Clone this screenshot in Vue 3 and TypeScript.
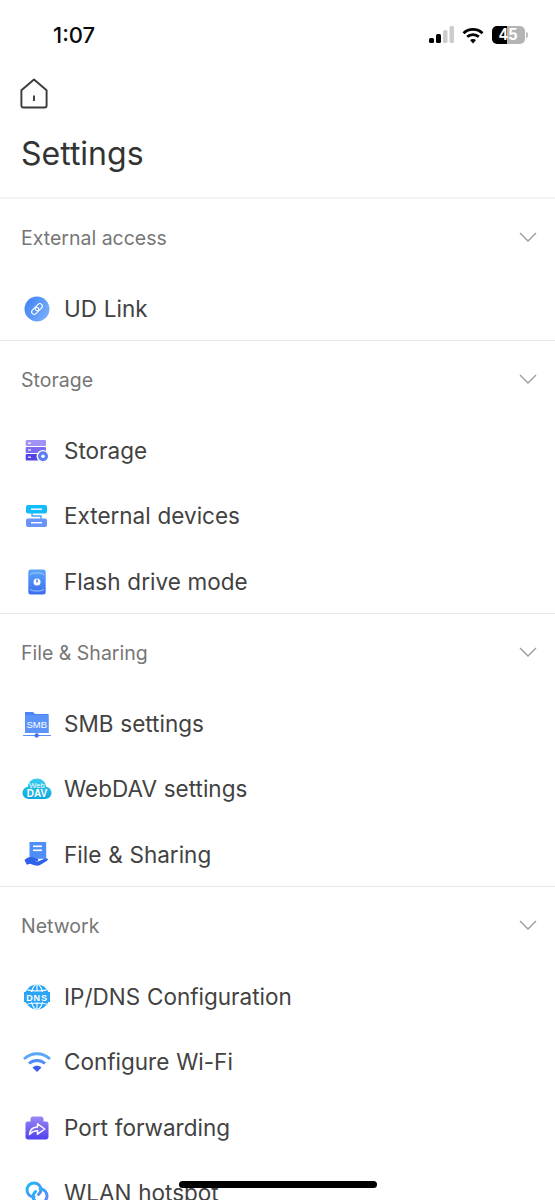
<script setup lang="ts">
interface Row { label: string; icon: string }
interface Section { title: string; rows: Row[] }
const sections: Section[] = [
  { title: 'External access', rows: [{ label: 'UD Link', icon: 'link' }] },
  { title: 'Storage', rows: [
    { label: 'Storage', icon: 'storage' },
    { label: 'External devices', icon: 'devices' },
    { label: 'Flash drive mode', icon: 'flash' },
  ] },
  { title: 'File & Sharing', rows: [
    { label: 'SMB settings', icon: 'smb' },
    { label: 'WebDAV settings', icon: 'webdav' },
    { label: 'File & Sharing', icon: 'share' },
  ] },
  { title: 'Network', rows: [
    { label: 'IP/DNS Configuration', icon: 'dns' },
    { label: 'Configure Wi-Fi', icon: 'wifi' },
    { label: 'Port forwarding', icon: 'port' },
    { label: 'WLAN hotspot', icon: 'wlan' },
  ] },
]
</script>

<template>
  <div class="page">
    <div class="status">
      <span class="time">1:07</span>
      <div class="status-right">
        <svg width="25" height="18" viewBox="0 0 25 18" class="signal">
          <rect x="0" y="12" width="5" height="5" rx="1.5" fill="#000" />
          <rect x="7" y="8" width="5" height="9" rx="1.5" fill="#000" />
          <rect x="14" y="4" width="4.5" height="13" rx="1.5" fill="#ccc" />
          <rect x="20.5" y="0" width="4.5" height="17" rx="1.5" fill="#ccc" />
        </svg>
        <svg width="22" height="17" viewBox="0 0 22 17" class="swifi">
          <path d="M1.5 6.2C6.8 1.2 15.2 1.2 20.5 6.2" fill="none" stroke="#000" stroke-width="2.8" />
          <path d="M5.2 9.8C8.5 6.8 13.5 6.8 16.8 9.8" fill="none" stroke="#000" stroke-width="2.8" />
          <path d="M8 13C9.8 11.6 12.2 11.6 14 13L11 16.4Z" fill="#000" />
        </svg>
        <div class="battery">
          <div class="battery-body"><span>45</span></div>
          <div class="battery-tip"></div>
        </div>
      </div>
    </div>

    <div class="header">
      <svg class="home" width="28" height="31" viewBox="0 0 28 31">
        <path d="M14 1.5L26.6 12.2V27.6C26.6 28.7 25.8 29.5 24.7 29.5H3.3C2.2 29.5 1.4 28.7 1.4 27.6V12.2Z" fill="none" stroke="#3a3a3a" stroke-width="1.9" stroke-linejoin="round" />
        <path d="M14 17.5V23" stroke="#3a3a3a" stroke-width="1.9" />
      </svg>
      <h1 class="title">Settings</h1>
    </div>

    <section v-for="s in sections" :key="s.title" class="section">
      <div class="section-head">
        <span class="section-title">{{ s.title }}</span>
        <svg class="chevron" width="18" height="10" viewBox="0 0 18 10">
          <path d="M1 1L9 9L17 1" fill="none" stroke="#9a9a9a" stroke-width="1.3" />
        </svg>
      </div>
      <div v-for="r in s.rows" :key="r.label" class="row">
        <div class="icon">
          <svg v-if="r.icon === 'link'" width="28" height="28" viewBox="0 0 28 28">
            <defs><linearGradient id="g1" x1="0" y1="0.2" x2="1" y2="0.8"><stop offset="0" stop-color="#3f83f6" /><stop offset="1" stop-color="#7cb0fb" /></linearGradient></defs>
            <circle cx="14" cy="14" r="12.5" fill="url(#g1)" />
            <g fill="none" stroke="#fff" stroke-width="1.1" transform="rotate(-45 14 14)">
              <rect x="7.5" y="11.5" width="8" height="5" rx="2.5" />
              <rect x="12.5" y="11.5" width="8" height="5" rx="2.5" />
            </g>
          </svg>
          <svg v-else-if="r.icon === 'storage'" width="28" height="28" viewBox="0 0 28 28">
            <rect x="2.7" y="3" width="20.3" height="6" rx="1" fill="#a093f6" />
            <rect x="2.7" y="10" width="20.3" height="6" rx="1" fill="#7c6bf0" />
            <rect x="2.7" y="17" width="20.3" height="6.5" rx="1" fill="#5342e4" />
            <rect x="5" y="5.5" width="3" height="1.2" fill="#fff" />
            <rect x="5" y="12.4" width="3" height="1.2" fill="#fff" />
            <rect x="5" y="19.6" width="3" height="1.2" fill="#fff" />
            <circle cx="20" cy="19.3" r="6.4" fill="#fff" />
            <circle cx="20" cy="19.3" r="5" fill="#5b7ff2" />
            <circle cx="20" cy="19.3" r="1.8" fill="#fff" />
          </svg>
          <svg v-else-if="r.icon === 'devices'" width="28" height="28" viewBox="0 0 28 28">
            <rect x="3" y="3" width="21" height="8.5" rx="2" fill="#12bcfb" />
            <rect x="3" y="16.5" width="21" height="8.5" rx="2" fill="#6a93fa" />
            <rect x="8" y="6.5" width="11" height="1.4" fill="#fff" />
            <rect x="8" y="20" width="11" height="1.4" fill="#fff" />
            <path d="M9 11V14H18V17" fill="none" stroke="#4aa5fb" stroke-width="1.4" />
          </svg>
          <svg v-else-if="r.icon === 'flash'" width="28" height="28" viewBox="0 0 28 28">
            <defs><linearGradient id="g2" x1="0" y1="0" x2="0" y2="1"><stop offset="0" stop-color="#5aa6f8" /><stop offset="1" stop-color="#3d6df2" /></linearGradient></defs>
            <rect x="5.3" y="1.5" width="17.4" height="25" rx="2.5" fill="url(#g2)" />
            <path d="M7 7C8 5.5 10 5 14 5C18 5 20 5.5 21 7M7 21C8 22.5 10 23 14 23C18 23 20 22.5 21 21" fill="none" stroke="#a8d0fc" stroke-width="0.9" />
            <circle cx="14" cy="14" r="3.5" fill="#fff" />
            <rect x="13.3" y="11.5" width="1.4" height="3" fill="#3f74f2" />
          </svg>
          <svg v-else-if="r.icon === 'smb'" width="30" height="30" viewBox="0 0 30 30">
            <path d="M3 3H11L13 5H26.5V24H3Z" fill="#4a85f6" />
            <path d="M3 6H26.5V24H3Z" fill="#5b93f8" />
            <text x="14.7" y="19" text-anchor="middle" class="ic-text smb-t">SMB</text>
            <rect x="1" y="26" width="28" height="1" fill="#5c8ff4" />
            <circle cx="14.7" cy="26.4" r="2.2" fill="#3f74f2" />
          </svg>
          <svg v-else-if="r.icon === 'webdav'" width="30" height="30" viewBox="0 0 30 30">
            <defs><linearGradient id="g3" x1="0" y1="0" x2="0" y2="1"><stop offset="0" stop-color="#35cdf0" /><stop offset="1" stop-color="#0ea8dc" /></linearGradient></defs>
            <path d="M7 25C3.5 25 0.5 22.4 0.5 18.8C0.5 15.6 2.8 13.2 5.8 12.7C6.4 7.6 10.4 4.5 15 4.5C19.6 4.5 23.4 7.6 24.2 12.7C27.2 13.2 29.5 15.6 29.5 18.8C29.5 22.4 26.5 25 23 25Z" fill="url(#g3)" />
            <text x="15" y="13.6" text-anchor="middle" class="ic-text web-t">Web</text>
            <text x="15" y="22.6" text-anchor="middle" class="ic-text dav-t">DAV</text>
          </svg>
          <svg v-else-if="r.icon === 'share'" width="28" height="28" viewBox="0 0 28 28">
            <path d="M6.5 1H22C22.8 1 23.2 1.4 23.2 2.2V16.5C23.2 17.3 22.8 17.8 22 17.8H7.7C6.9 17.8 6.5 17.3 6.5 16.5Z" fill="#4f8ef6" />
            <rect x="10" y="4.5" width="9" height="1.6" fill="#fff" />
            <rect x="10" y="8.5" width="9" height="1.6" fill="#fff" />
            <path d="M1.5 19C4 16.5 7 15.5 10 16.5L14.5 17.8C16 18.2 15.6 20.2 14 20L10.5 19.7L15 20.6L22 17.5C24.5 16.6 25.8 18.4 24 19.8L17 24C15.5 24.8 13.5 24.9 11.5 24.2L7 22.8L3.8 23.8Z" fill="#2f62ea" />
          </svg>
          <svg v-else-if="r.icon === 'dns'" width="28" height="28" viewBox="0 0 28 28">
            <defs><clipPath id="c1"><circle cx="14" cy="14" r="12.5" /></clipPath></defs>
            <circle cx="14" cy="14" r="12.5" fill="#2aa4f6" />
            <g clip-path="url(#c1)" fill="none" stroke="#fff" stroke-width="1.1">
              <ellipse cx="14" cy="14" rx="6" ry="12.5" />
              <path d="M14 1V8M14 20V27M3 6.5C9 8.5 19 8.5 25 6.5M3 21.5C9 19.5 19 19.5 25 21.5" />
            </g>
            <rect x="1" y="9" width="26" height="10" fill="#2aa4f6" />
            <text x="14" y="17.8" text-anchor="middle" class="ic-text dns-t">DNS</text>
          </svg>
          <svg v-else-if="r.icon === 'wifi'" width="30" height="28" viewBox="0 0 30 28">
            <path d="M2 11C9.5 4 20.5 4 28 11" fill="none" stroke="#5ba6f9" stroke-width="2.8" />
            <path d="M7 15.5C11.5 11.5 18.5 11.5 23 15.5" fill="none" stroke="#4d8ff6" stroke-width="2.8" />
            <path d="M10.5 19.5C13 17.3 17 17.3 19.5 19.5L15 24Z" fill="#3a5ee9" />
          </svg>
          <svg v-else-if="r.icon === 'port'" width="28" height="28" viewBox="0 0 28 28">
            <defs><linearGradient id="g4" x1="0" y1="0" x2="0" y2="1"><stop offset="0" stop-color="#9a88f4" /><stop offset="1" stop-color="#4f40ee" /></linearGradient></defs>
            <path d="M2.5 9.5C2.5 8.5 3.5 7.5 4.5 7.5H7.5V5C7.5 3.5 8.5 2.5 10 2.5H18C19.5 2.5 20.5 3.5 20.5 5V7.5H23.5C24.5 7.5 25.5 8.5 25.5 9.5V23C25.5 24.3 24.3 25.5 23 25.5H5C3.7 25.5 2.5 24.3 2.5 23Z" fill="url(#g4)" />
            <path d="M6.5 20.5C7 15.5 10 13 14.5 13V9.8L21.8 15L14.5 20.2V16.8C11.5 16.8 8.8 18 6.5 20.5Z" fill="#7a68ef" stroke="#fff" stroke-width="1.5" stroke-linejoin="round" />
          </svg>
          <svg v-else width="28" height="28" viewBox="0 0 28 28">
            <defs><linearGradient id="g5" x1="0" y1="0" x2="1" y2="1"><stop offset="0" stop-color="#12bcfb" /><stop offset="1" stop-color="#6a80f8" /></linearGradient></defs>
            <path d="M11 18C7 18 4 15 4 11C4 7 7 4 11 4C15 4 18 7 18 11C18 13 17 14 15.5 15.5" fill="none" stroke="url(#g5)" stroke-width="3" stroke-linecap="round" />
            <path d="M17 10C21 10 24 13 24 17C24 21 21 24 17 24C13 24 10 21 10 17C10 15 11 14 12.5 12.5" fill="none" stroke="url(#g5)" stroke-width="3" stroke-linecap="round" />
          </svg>
        </div>
        <span class="row-label">{{ r.label }}</span>
      </div>
    </section>

    <div class="home-indicator"></div>
  </div>
</template>

<style scoped>
.page {
  position: relative;
  width: 555px;
  height: 1200px;
  overflow: hidden;
  background: #fff;
  font-family: Inter, "Liberation Sans", sans-serif;
  color: #3a3a3a;
}
.status {
  height: 71px;
  display: flex;
  justify-content: space-between;
  align-items: flex-start;
  padding: 0 27px 0 53px;
  box-sizing: border-box;
}
.time {
  margin-top: 22px;
  font-size: 22px;
  line-height: 27px;
  font-weight: 500;
  color: #0a0a0a;
}
.status-right {
  display: flex;
  align-items: center;
  margin-top: 26px;
  height: 18px;
}
.signal { margin-right: 8px; }
.swifi { margin-right: 8px; }
.battery {
  display: flex;
  align-items: center;
}
.battery-body {
  width: 33px;
  height: 18px;
  border-radius: 5px;
  background: linear-gradient(90deg, #000 0 46%, #b4b4b4 46% 100%);
  color: #fff;
  font-size: 16px;
  font-weight: 700;
  line-height: 18px;
  text-align: center;
  font-family: "Liberation Sans", sans-serif;
  letter-spacing: 0.5px;
}
.battery-tip {
  width: 2px;
  height: 6px;
  margin-left: 1px;
  border-radius: 0 2px 2px 0;
  background: #bdbdbd;
}
.header {
  height: 128px;
  padding: 7px 21px 0 20px;
  box-sizing: border-box;
  border-bottom: 2px solid #f3f3f4;
}
.home { display: block; }
.title {
  margin: 26px 0 0 1px;
  font-size: 32px;
  line-height: 38px;
  font-weight: 400;
  color: #333;
}
.section {
  border-bottom: 1px solid #e8e8ea;
}
.section:last-of-type { border-bottom: none; }
.section-head {
  height: 76px;
  padding: 2px 18px 0 21px;
  box-sizing: border-box;
  display: flex;
  justify-content: space-between;
  align-items: center;
}
.section-title {
  font-size: 19.5px;
  line-height: 26px;
  color: #767676;
}
.chevron { margin-top: -3px; }
.row {
  height: 65.33px;
  display: flex;
  align-items: center;
  padding: 2px 0 0 22px;
  box-sizing: border-box;
}
.icon {
  width: 30px;
  height: 30px;
  display: flex;
  align-items: center;
  justify-content: center;
  margin-right: 12px;
}
.row-label {
  font-size: 22.5px;
  line-height: 30px;
  word-spacing: 0.5px;
  color: #424242;
}
.ic-text { font-family: "Liberation Sans", sans-serif; fill: #fff; }
.smb-t { font-size: 9.5px; }
.web-t { font-size: 7.5px; }
.dav-t { font-size: 10px; font-weight: 700; }
.dns-t { font-size: 9px; font-weight: 700; letter-spacing: 0.8px; }
.home-indicator {
  position: absolute;
  left: 179px;
  top: 1181px;
  width: 198px;
  height: 7px;
  border-radius: 4px;
  background: #000;
}
</style>
